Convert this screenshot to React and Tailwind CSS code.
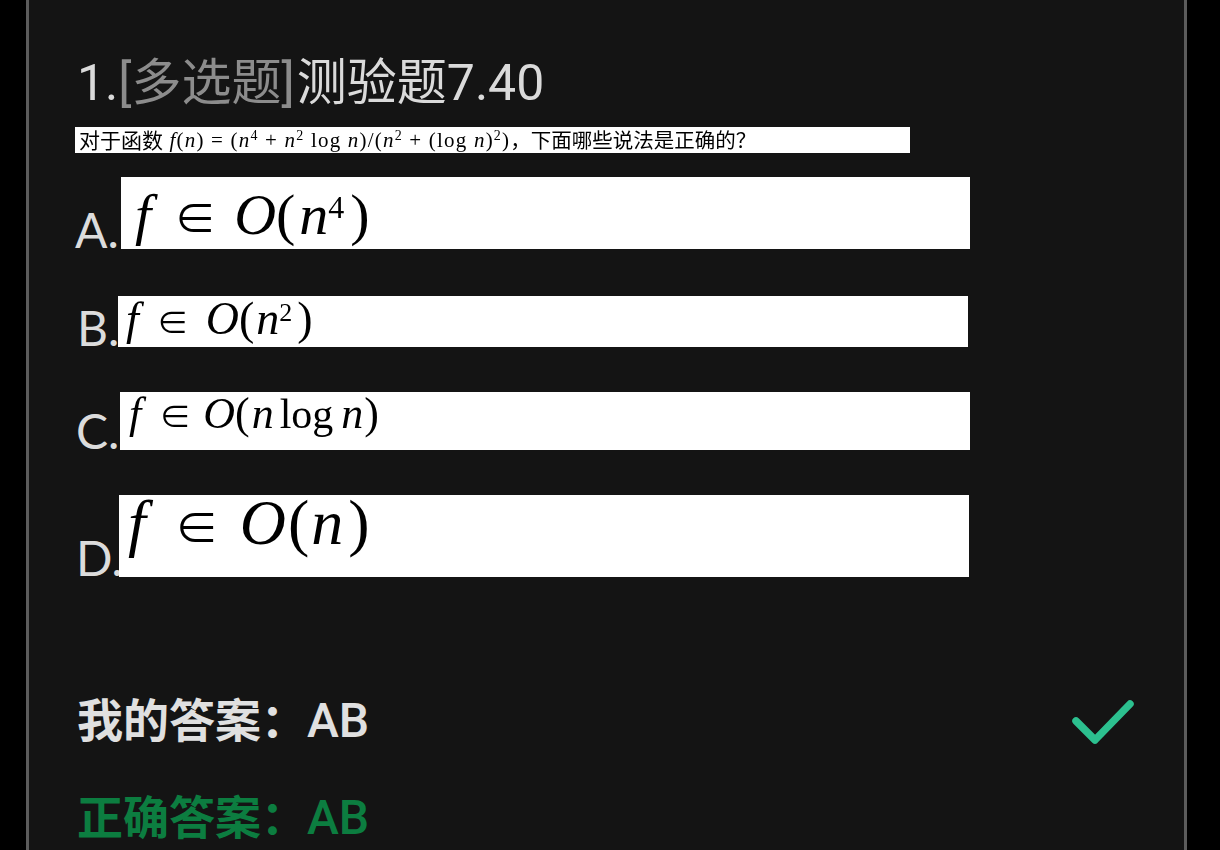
import React from "react";

const CJK = "font-['Roboto','Noto_Sans_CJK_SC',sans-serif]";
const SERIF = "font-['Liberation_Serif','Noto_Sans_CJK_SC',serif]";

const Formula = ({ size, top, pl, children }) => (
  <div
    className={`${SERIF} flex items-baseline whitespace-pre text-black blur-[0.4px] leading-none`}
    style={{ fontSize: size, marginTop: top, paddingLeft: pl }}
  >
    {children}
  </div>
);

const Option = ({ label, className, labelClass = "", children }) => (
  <div className={`flex items-end ${className}`}>
    <span className={`font-['Lato',sans-serif] text-[48px] leading-none text-[#dcdcdc] -mb-[5px] ${labelClass}`}>
      {label}
    </span>
    <div className="h-full bg-white">{children}</div>
  </div>
);

export default function App() {
  return (
    <div className="h-[850px] overflow-hidden bg-black pl-[26px] pr-[33px]">
      <main className="h-full border-x-[3px] border-[#5c5c5c] bg-[#141414] pl-[46px] pr-[46px] pt-[48px]">
        <h1 className={`${CJK} text-[50px] leading-[70px] font-normal text-[#dadada] whitespace-nowrap`}>
          <span className="ml-[2px]">1.</span>
          <span className="text-[#8c8c8c]">[多选题]</span>
          <span className="ml-[2px]">测验题7.40</span>
        </h1>

        <div className={`mt-[9px] flex h-[26px] w-[835px] items-center bg-white pl-[4px] text-black whitespace-pre ${SERIF} text-[21px] tracking-[1.2px] leading-none blur-[0.3px]`}>
          <span className="font-['Noto_Sans_CJK_SC',sans-serif] text-[21px] tracking-normal -mt-[2px]">对于函数</span>
          <span> <i>f</i>(<i>n</i>) = (<i>n</i><sup className="text-[14px]">4</sup> + <i>n</i><sup className="text-[14px]">2</sup> log <i>n</i>)/(<i>n</i><sup className="text-[14px]">2</sup> + (log <i>n</i>)<sup className="text-[14px]">2</sup>)</span>
          <span className="font-['Noto_Sans_CJK_SC',sans-serif] text-[20.5px] tracking-normal -mt-[2px]">，下面哪些说法是正确的？</span>
        </div>

        <Option label="A." className="mt-[24px] h-[72px]" labelClass="w-[46px]">
          <div className="w-[849px]">
            <Formula size={58} top={9} pl={14}>
              <i>f</i><span className="ml-[23px] text-[42px]">∈</span><i className="ml-[18px]">O</i><span>(</span><i className="ml-[4px]">n</i><sup className="text-[32px]">4</sup><span className="ml-[6px]">)</span>
            </Formula>
          </div>
        </Option>

        <Option label="B." className="mt-[47px] h-[51px]" labelClass="w-[41px] ml-[2px]">
          <div className="w-[850px]">
            <Formula size={46} top={0} pl={8}>
              <i>f</i><span className="ml-[18px] text-[32px]">∈</span><i className="ml-[17px]">O</i><span>(</span><i className="ml-[2px]">n</i><sup className="text-[26px]">2</sup><span className="ml-[5px]">)</span>
            </Formula>
          </div>
        </Option>

        <Option label="C." className="mt-[45px] h-[58px]" labelClass="w-[44px] ml-[1px]">
          <div className="w-[850px]">
            <Formula size={44} top={0} pl={9}>
              <i>f</i><span className="ml-[18px] text-[32px]">∈</span><i className="ml-[12px]">O</i><span>(</span><i className="ml-[2px]">n</i><span className="ml-[6px] text-[42px]">log</span><i className="ml-[8px]">n</i><span className="ml-[1px]">)</span>
            </Formula>
          </div>
        </Option>

        <Option label="D." className="mt-[45px] h-[82px]" labelClass="w-[43px] ml-[1px]">
          <div className="w-[850px]">
            <Formula size={64} top={-4} pl={9}>
              <i>f</i><span className="ml-[29px] text-[44px]">∈</span><i className="ml-[21px]">O</i><span className="ml-[2px]">(</span><i className="ml-[2px]">n</i><span className="ml-[5px]">)</span>
            </Formula>
          </div>
        </Option>

        <div className={`${CJK} mt-[114px] flex items-center justify-between text-[46px] font-semibold leading-[60px] text-[#e0e0e0]`}>
          <span className="ml-[2px]">我的答案：<span className="text-[48px] font-medium">AB</span></span>
          <svg width="74" height="52" viewBox="0 0 74 52" className="-mt-[2px]" fill="none">
            <path d="M12 27 L31 46 L66 10" stroke="#2cc08f" strokeWidth="7.5" strokeLinecap="round" strokeLinejoin="round" />
          </svg>
        </div>
        <div className={`${CJK} mt-[37px] text-[46px] font-semibold leading-[60px] text-[#0c7d40]`}>
          <span className="ml-[2px]">正确答案：<span className="text-[48px] font-medium">AB</span></span>
        </div>
      </main>
    </div>
  );
}
